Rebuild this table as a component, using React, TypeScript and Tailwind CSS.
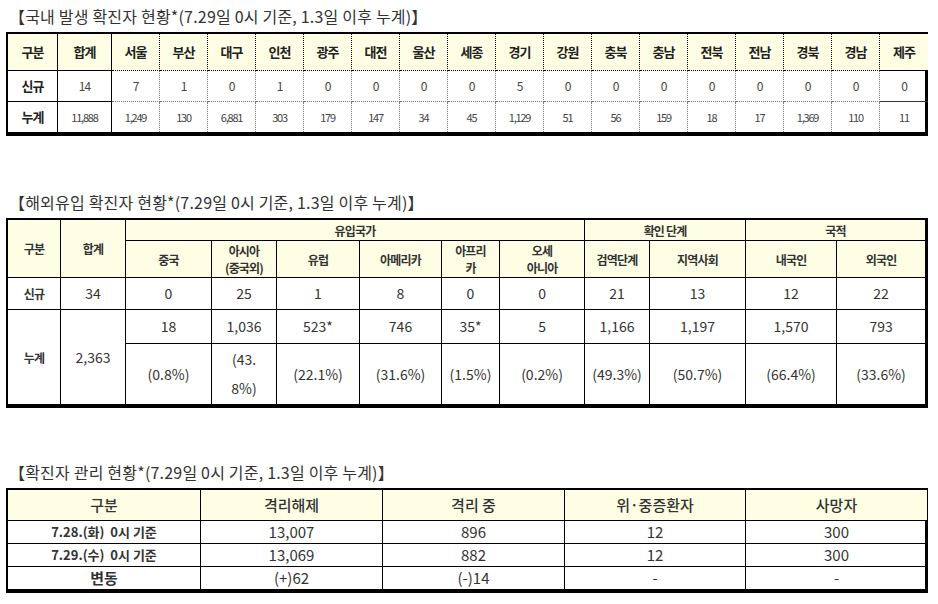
import React from 'react'

const FONT = '"Noto Sans CJK KR", "Noto Sans", sans-serif'
const HEAD_BG = 'bg-[#fefee4]'

const regions = ['서울', '부산', '대구', '인천', '광주', '대전', '울산', '세종', '경기', '강원', '충북', '충남', '전북', '전남', '경북', '경남', '제주']
const newByRegion = ['7', '1', '0', '1', '0', '0', '0', '0', '5', '0', '0', '0', '0', '0', '0', '0', '0']
const totalByRegion = ['1,249', '130', '6,881', '303', '179', '147', '34', '45', '1,129', '51', '56', '159', '18', '17', '1,369', '110', '11']

function Title({ children }: { children: React.ReactNode }) {
  return <div className="text-[16px] leading-[24px] pb-[4px] text-[#333] pl-[3px] tracking-[0.2px]">{children}</div>
}

function DomesticTable() {
  const cols = [50, 54, ...regions.map(() => 48)]
  const isLast = (i: number) => i === cols.length - 1
  const vb = (i: number) =>
    isLast(i) ? '' : i < 2 ? 'border-r border-black' : 'border-r border-dotted border-[#777]'
  return (
    <div className="border-t-2 border-l-2 border-r-[3px] border-b-4 border-black w-[922px]">
      <table className="w-full table-fixed border-separate border-spacing-0">
        <colgroup>
          {cols.map((w, i) => (
            <col key={i} style={{ width: w }} />
          ))}
        </colgroup>
        <tbody>
          <tr className={`h-[37px] ${HEAD_BG}`}>
            {['구분', '합계', ...regions].map((t, i) => (
              <td key={t} className={`${vb(i)} border-b border-black text-center text-[13px] font-bold text-[#222] tracking-[-1px]`}>
                {t}
              </td>
            ))}
          </tr>
          <tr className="h-[31px]">
            {['신규', '14', ...newByRegion].map((t, i) => (
              <td
                key={i}
                className={`${vb(i)} border-b border-[#333] text-center ${i === 0 ? 'text-[13px] font-bold text-[#222]' : 'text-[12px] text-[#444]'} tracking-[-1px]`}
              >
                {t}
              </td>
            ))}
          </tr>
          <tr className="h-[30px]">
            {['누계', '11,888', ...totalByRegion].map((t, i) => (
              <td
                key={i}
                className={`${vb(i)} text-center ${i === 0 ? 'text-[13px] font-bold text-[#222] tracking-[-1px]' : 'text-[11px] text-[#444] tracking-[-1.2px]'}`}
              >
                {t}
              </td>
            ))}
          </tr>
        </tbody>
      </table>
    </div>
  )
}

function OverseasTable() {
  const cols = [53, 65, 86, 65, 83, 82, 58, 85, 65, 96, 91, 88]
  const hd = 'text-center text-[12px] font-bold text-[#333] tracking-[-0.8px] leading-[17px]'
  const cell = 'text-center text-[14px] text-[#333]'
  const br = 'border-r border-b border-black'
  const counts = ['18', '1,036', '523*', '746', '35*', '5', '1,166', '1,197', '1,570', '793']
  const pcts: React.ReactNode[] = ['(0.8%)', <>(43.<br />8%)</>, '(22.1%)', '(31.6%)', '(1.5%)', '(0.2%)', '(49.3%)', '(50.7%)', '(66.4%)', '(33.6%)']
  const newRow = ['0', '25', '1', '8', '0', '0', '21', '13', '12', '22']
  const r = (i: number, n: number) => (i === n - 1 ? 'border-b border-black' : br)
  return (
    <div className="border-t-2 border-l-2 border-r-[3px] border-b-4 border-black w-[922px]">
      <table className="w-full table-fixed border-separate border-spacing-0">
        <colgroup>
          {cols.map((w, i) => (
            <col key={i} style={{ width: w }} />
          ))}
        </colgroup>
        <tbody>
          <tr className={`h-[21px] ${HEAD_BG}`}>
            <td rowSpan={2} className={`${br} ${hd}`}>구분</td>
            <td rowSpan={2} className={`${br} ${hd}`}>합계</td>
            <td colSpan={6} className={`${br} ${hd}`}>유입국가</td>
            <td colSpan={2} className={`${br} ${hd}`}>확인 단계</td>
            <td colSpan={2} className={`border-b border-black ${hd}`}>국적</td>
          </tr>
          <tr className={`h-[37px] ${HEAD_BG}`}>
            <td className={`${br} ${hd}`}>중국</td>
            <td className={`${br} ${hd}`}>아시아<br />(중국외)</td>
            <td className={`${br} ${hd}`}>유럽</td>
            <td className={`${br} ${hd}`}>아메리카</td>
            <td className={`${br} ${hd}`}>아프리<br />카</td>
            <td className={`${br} ${hd}`}>오세<br />아니아</td>
            <td className={`${br} ${hd}`}>검역단계</td>
            <td className={`${br} ${hd}`}>지역사회</td>
            <td className={`${br} ${hd}`}>내국인</td>
            <td className={`border-b border-black ${hd}`}>외국인</td>
          </tr>
          <tr className="h-[32px]">
            <td className={`${br} ${hd}`}>신규</td>
            <td className={`${br} ${cell}`}>34</td>
            {newRow.map((t, i) => (
              <td key={i} className={`${r(i, newRow.length)} ${cell}`}>{t}</td>
            ))}
          </tr>
          <tr className="h-[34px]">
            <td rowSpan={2} className={`border-r border-black ${hd}`}>누계</td>
            <td rowSpan={2} className={`border-r border-black ${cell}`}>2,363</td>
            {counts.map((t, i) => (
              <td key={i} className={`${r(i, counts.length)} ${cell}`}>{t}</td>
            ))}
          </tr>
          <tr className="h-[60px]">
            {pcts.map((t, i) => (
              <td key={i} className={`${i === pcts.length - 1 ? '' : 'border-r border-black'} ${cell} leading-[29px]`}>{t}</td>
            ))}
          </tr>
        </tbody>
      </table>
    </div>
  )
}

function ManagementTable() {
  const cols = [193, 182, 182, 181, 181]
  const rows = [
    ['7.28.(화)  0시 기준', '13,007', '896', '12', '300'],
    ['7.29.(수)  0시 기준', '13,069', '882', '12', '300'],
    ['변동', '(+)62', '(-)14', '-', '-'],
  ]
  return (
    <div className="border-t-2 border-l-2 border-r-[3px] border-b-4 border-black w-[922px]">
      <table className="w-full table-fixed border-separate border-spacing-0">
        <colgroup>
          {cols.map((w, i) => (
            <col key={i} style={{ width: w }} />
          ))}
        </colgroup>
        <tbody>
          <tr className={`h-[31px] ${HEAD_BG}`}>
            {['구분', '격리해제', '격리 중', '위·중증환자', '사망자'].map((t, i) => (
              <td key={t} className={`${i < 4 ? 'border-r' : ''} border-b border-black text-center text-[15px] font-medium text-[#333]`}>
                {t}
              </td>
            ))}
          </tr>
          {rows.map((row, ri) => (
            <tr key={ri} className={ri < 2 ? 'h-[23px]' : 'h-[22px]'}>
              {row.map((t, i) => (
                <td
                  key={i}
                  className={`${i < 4 ? 'border-r' : ''} ${ri < 2 ? 'border-b' : ''} border-black text-center whitespace-pre leading-[20px] ${
                    i === 0
                      ? ri === 2
                        ? 'text-[15px] font-bold text-[#333]'
                        : 'text-[13px] font-bold text-[#333]'
                      : 'text-[15px] text-[#333]'
                  }`}
                >
                  {t}
                </td>
              ))}
            </tr>
          ))}
        </tbody>
      </table>
    </div>
  )
}

export default function App() {
  return (
    <div className="w-[938px] h-[604px] bg-white pl-[6px] pt-[4px]" style={{ fontFamily: FONT }}>
      <Title>【국내 발생 확진자 현황*(7.29일 0시 기준, 1.3일 이후 누계)】</Title>
      <DomesticTable />
      <div className="mt-[54px]">
        <Title>【해외유입 확진자 현황*(7.29일 0시 기준, 1.3일 이후 누계)】</Title>
      </div>
      <OverseasTable />
      <div className="mt-[52px]">
        <Title>【확진자 관리 현황*(7.29일 0시 기준, 1.3일 이후 누계)】</Title>
      </div>
      <ManagementTable />
    </div>
  )
}
